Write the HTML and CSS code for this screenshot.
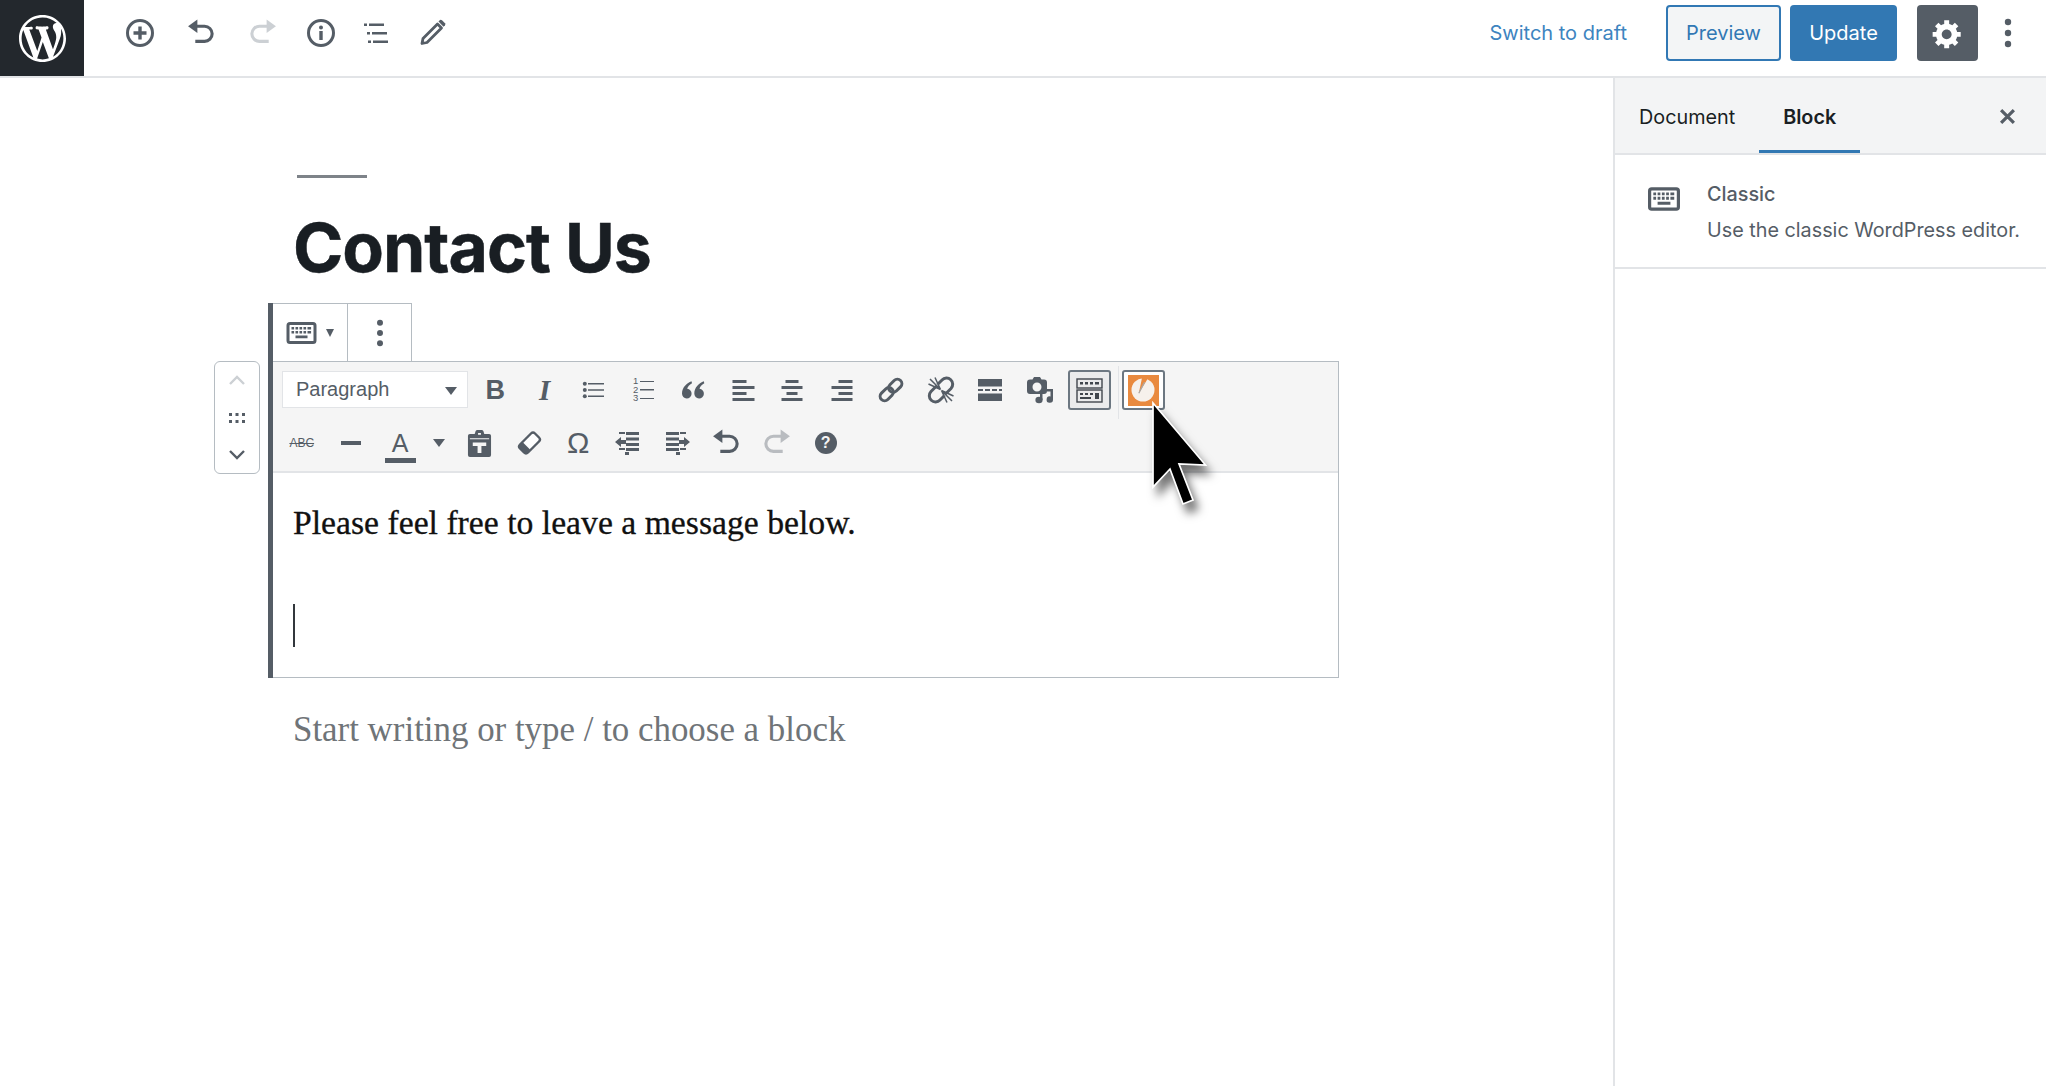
FILE: index.html
```html
<!DOCTYPE html>
<html>
<head>
  <title>Edit Page - Contact Us</title>
  <meta name="viewport" content="width=device-width, initial-scale=1">
  <link rel="stylesheet" href="styles.css">
</head>

<body>

  <svg class="defs" width="0" height="0">
    <symbol id="keyboard" viewBox="0 0 30 22">
      <rect x="1.5" y="1.5" width="27" height="19" rx="2" fill="none" stroke="currentColor" stroke-width="3"/>
      <path d="M5 5h2.6v2.6H5zM9 5h2.6v2.6H9zM13 5h2.6v2.6H13zM17 5h2.6v2.6H17zM21 5h3.6v2.6H21zM5 9h2.6v2.6H5zM9 9h2.6v2.6H9zM13 9h2.6v2.6H13zM17 9h2.6v2.6H17zM21 9h3.6v2.6H21zM9 13.500h12v2.800H9z" fill="currentColor"/>
    </symbol>
    <symbol id="undo" viewBox="0 0 30 30">
      <path d="M2 8 L11 1.500 V14.500 Z" fill="currentColor"/>
      <path d="M10 8 H18 A7.300 7.300 0 0 1 18 22.600 H9" fill="none" stroke="currentColor" stroke-width="3"/>
    </symbol>
    <symbol id="redo" viewBox="0 0 30 30">
      <path d="M28 8 L19 1.500 V14.500 Z" fill="currentColor"/>
      <path d="M20 8 H12 A7.300 7.300 0 0 0 12 22.600 H21" fill="none" stroke="currentColor" stroke-width="3"/>
    </symbol>
    <symbol id="dots" viewBox="0 0 10 30">
      <circle cx="5" cy="4" r="3.200" fill="currentColor"/>
      <circle cx="5" cy="15" r="3.200" fill="currentColor"/>
      <circle cx="5" cy="26" r="3.200" fill="currentColor"/>
    </symbol>
  </svg>

  <header class="topbar">
    <a class="wp-logo" href="#">
      <svg width="47" height="47" viewBox="0 0 20 20"><path fill="#fff" d="M20 10c0-5.510-4.490-10-10-10C4.480 0 0 4.490 0 10c0 5.520 4.480 10 10 10 5.510 0 10-4.480 10-10zM7.780 15.370L4.370 6.220c.55-.02 1.170-.08 1.170-.08.5-.06.44-1.130-.06-1.110 0 0-1.450.11-2.370.11-.18 0-.37 0-.58-.01C4.120 2.690 6.870 1.110 10 1.110c2.330 0 4.450.87 6.050 2.340-.68-.11-1.650.39-1.650 1.580 0 .74.45 1.360.9 2.100.35.61.55 1.360.55 2.460 0 1.490-1.400 5-1.400 5l-3.030-8.370c.54-.02.82-.17.82-.17.5-.05.44-1.250-.06-1.220 0 0-1.440.12-2.380.12-.87 0-2.330-.12-2.330-.12-.5-.03-.56 1.200-.06 1.220l.92.08 1.260 3.410zM17.410 10c.24-.64.74-1.870.43-4.250.7 1.290 1.050 2.710 1.050 4.250 0 3.290-1.730 6.240-4.400 7.780.97-2.590 1.940-5.200 2.920-7.780zM6.100 18.090C3.120 16.650 1.110 13.530 1.110 10c0-1.300.23-2.480.72-3.590C3.250 10.300 4.670 14.200 6.100 18.090zm4.030-6.630l2.580 6.980c-.86.29-1.760.45-2.710.45-.79 0-1.570-.11-2.290-.33.81-2.380 1.620-4.740 2.420-7.100z"/></svg>
    </a>
    <div class="top-tools">
      <button class="top-btn"><svg width="30" height="30" viewBox="0 0 30 30"><circle cx="15" cy="15" r="12.500" fill="none" stroke="currentColor" stroke-width="3"/><path d="M13.300 8.500h3.400v4.800h4.800v3.400h-4.800v4.800h-3.400v-4.800H8.500v-3.400h4.800z" fill="currentColor"/></svg></button>
      <button class="top-btn"><svg width="31" height="31"><use href="#undo"/></svg></button>
      <button class="top-btn disabled"><svg width="31" height="31"><use href="#redo"/></svg></button>
      <button class="top-btn tight"><svg width="30" height="30" viewBox="0 0 30 30"><circle cx="15" cy="15" r="12.500" fill="none" stroke="currentColor" stroke-width="3"/><circle cx="15" cy="9.500" r="2" fill="currentColor"/><rect x="13.300" y="13" width="3.400" height="9" fill="currentColor"/></svg></button>
      <button class="top-btn tighter"><svg width="30" height="30" viewBox="0 0 30 30"><path d="M2 5.500h3v2.600H2zM7 5.500h15v2.600H7zM5 14h3v2.600H5zM10 14h15v2.600H10zM6 22.500h3v2.600H6zM11 22.500h15v2.600H11z" fill="currentColor"/></svg></button>
      <button class="top-btn tighter"><svg width="30" height="30" viewBox="0 0 30 30"><path d="M6 20.500 L20.500 6 L24.500 10 L10 24.500 L5 25.500 Z" fill="none" stroke="currentColor" stroke-width="2.800" stroke-linejoin="round"/><path d="M21.500 3.500 L23 2 Q24 1.500 25 2.300 L28 5.300 Q28.700 6.300 28 7.300 L26.500 8.800 Z" fill="currentColor"/></svg></button>
    </div>
    <div class="top-actions">
      <a class="draft-link" href="#">Switch to draft</a>
      <button class="btn btn-preview">Preview</button>
      <button class="btn btn-update">Update</button>
      <button class="btn btn-settings"><svg width="33" height="33" viewBox="0 0 20 20"><path fill="#fff" fill-rule="evenodd" d="M18 12h-2.180c-.17.7-.44 1.350-.81 1.930l1.540 1.540-2.100 2.100-1.540-1.540c-.58.36-1.230.63-1.910.79V19H8v-2.180c-.68-.16-1.330-.43-1.910-.79l-1.540 1.540-2.120-2.120 1.540-1.540c-.36-.58-.63-1.230-.79-1.910H1V9.030h2.170c.16-.7.44-1.350.8-1.940L2.430 5.550l2.100-2.100 1.540 1.540c.58-.37 1.240-.64 1.930-.81V2h3v2.180c.68.16 1.330.43 1.910.79l1.540-1.540 2.120 2.120-1.540 1.540c.36.590.64 1.240.8 1.940H18V12zm-8.500 1.500c1.660 0 3-1.340 3-3s-1.340-3-3-3-3 1.340-3 3 1.340 3 3 3z"/></svg></button>
      <svg class="more" width="10" height="30"><use href="#dots"/></svg>
    </div>
  </header>

  <div class="layout">
    <main class="editor">
      <div class="post">
        <div class="title-wrap">
          <hr class="title-rule">
          <h1 class="post-title">Contact Us</h1>
        </div>

        <section class="block">
          <div class="block-tools">
            <div class="tool-cell tool-switch">
              <svg class="ink" width="31" height="22"><use href="#keyboard"/></svg>
              <span class="mini-caret"></span>
            </div>
            <div class="tool-cell tool-more">
              <svg class="ink" width="10" height="28"><use href="#dots"/></svg>
            </div>
          </div>

          <div class="mover">
            <svg class="mover-up" width="18" height="12" viewBox="0 0 18 12"><path d="M2 10 L9 3 L16 10" fill="none" stroke="currentColor" stroke-width="2.400"/></svg>
            <svg class="ink" width="18" height="12" viewBox="0 0 18 12"><path d="M1 1h3v3H1zM7.500 1h3v3h-3zM14 1h3v3h-3zM1 8h3v3H1zM7.500 8h3v3h-3zM14 8h3v3h-3z" fill="currentColor"/></svg>
            <svg class="ink" width="18" height="12" viewBox="0 0 18 12"><path d="M2 2 L9 9 L16 2" fill="none" stroke="currentColor" stroke-width="2.400"/></svg>
          </div>

          <div class="classic">
            <div class="mce-toolbar">
              <div class="mce-row">
                <div class="mce-select">Paragraph<span class="caret"></span></div>
                <span class="mce-btn glyph-b">B</span>
                <span class="mce-btn glyph-i">I</span>
                <span class="mce-btn"><svg width="24" height="24" viewBox="0 0 24 24"><path d="M6 5h16v1.500H6zM6 11.200h16v1.500H6zM6 17.400h16v1.500H6z" fill="currentColor"/><circle cx="2.800" cy="5.800" r="2" fill="currentColor"/><circle cx="2.800" cy="12" r="2" fill="currentColor"/><circle cx="2.800" cy="18.200" r="2" fill="currentColor"/></svg></span>
                <span class="mce-btn num-list"><span class="nums">1<br>2<br>3</span><span class="num-lines"></span></span>
                <span class="mce-btn"><svg width="24" height="20" viewBox="0 0 24 20"><path d="M10.500 1.200 C6 3 1 7 1 13.500 A4.800 4.800 0 1 0 6.200 8.800 C6.700 6.500 8.400 4.600 11 3.200 Z M22.800 1.200 C18.300 3 13.300 7 13.300 13.500 A4.800 4.800 0 1 0 18.500 8.800 C19 6.500 20.700 4.600 23.300 3.200 Z" fill="currentColor"/></svg></span>
                <span class="mce-btn"><svg width="24" height="22" viewBox="0 0 24 22"><path d="M1.500 1h14v3h-14zM1.500 7h22v3h-22zM1.500 13h14v3h-14zM1.500 19h22v3h-22z" fill="currentColor"/></svg></span>
                <span class="mce-btn"><svg width="24" height="22" viewBox="0 0 24 22"><path d="M5.500 1h13v3h-13zM1.500 7h21v3h-21zM6.500 13h11v3h-11zM1.500 19h21v3h-21z" fill="currentColor"/></svg></span>
                <span class="mce-btn"><svg width="24" height="22" viewBox="0 0 24 22"><path d="M8.500 1h14v3h-14zM1.500 7h21v3h-21zM8.500 13h14v3h-14zM1.500 19h21v3h-21z" fill="currentColor"/></svg></span>
                <span class="mce-btn"><svg width="28" height="28" viewBox="0 0 28 28"><g fill="none" stroke="currentColor" stroke-width="3" transform="rotate(-45 14 14)"><rect x="0.500" y="9.500" width="15" height="9" rx="4.500"/><rect x="12.500" y="9.500" width="15" height="9" rx="4.500"/></g></svg></span>
                <span class="mce-btn"><svg width="28" height="28" viewBox="0 0 28 28"><g fill="none" stroke="currentColor" stroke-width="3"><path d="M10.500 8.500 L15 4 A6 6 0 0 1 24 12.500 L18.500 18"/><path d="M17.500 19.500 L13 24 A6 6 0 0 1 4 15.500 L9.500 10"/></g><path d="M13.500 13.500 L3 3M13.500 13.500 L1.500 8M13.500 13.500 L8 1.500M14.500 14.500 L25 25M14.500 14.500 L26.500 20M14.500 14.500 L20 26.500" stroke="currentColor" stroke-width="1.500"/></svg></span>
                <span class="mce-btn"><svg width="24" height="22" viewBox="0 0 24 22"><path d="M0 0h24v7.500H0zM0 14.500h24V22H0zM0 10h5v2H0zM7 10h5v2H7zM14 10h5v2h-5zM21 10h3v2h-3z" fill="currentColor"/></svg></span>
                <span class="mce-btn"><svg width="30" height="28" viewBox="0 0 30 28"><path fill="currentColor" fill-rule="evenodd" d="M5 3.500h2.500L9 1h6l1.500 2.500H19a3 3 0 0 1 3 3V15a3 3 0 0 1-3 3H5a3 3 0 0 1-3-3V6.500a3 3 0 0 1 3-3zM12 6.500a4.500 4.500 0 1 0 0 9 4.500 4.500 0 0 0 0-9z"/><path fill="currentColor" d="M22 13h6v10.500A3.200 3.200 0 1 1 25.500 20.500V15.500H22z"/><ellipse cx="14" cy="24" rx="3.600" ry="3.200" fill="currentColor"/><path d="M15 15h2.500v9h-2.500z" fill="currentColor"/></svg></span>
                <span class="mce-btn"><span class="btn-frame active"><svg width="27" height="25" viewBox="0 0 27 25"><g fill="none" stroke="#40464d" stroke-width="1.400"><rect x="1" y="1" width="25" height="9"/><rect x="1" y="12" width="25" height="12"/></g><path d="M4 4h3v2.500H4zM9 4h3v2.500H9zM14 4h3v2.500h-3zM19 4h4v2.500h-4zM4 15h3v2H4zM9 15h3v2H9zM14 15h3v2h-3zM19 15h4v6h-4zM4 19h11v2H4z" fill="#40464d"/></svg></span></span>
                <span class="mce-sep"></span>
                <span class="btn-frame plugin">
                  <span class="plugin-icon"><svg width="26" height="26" viewBox="0 0 26 26"><circle cx="13" cy="13" r="11.500" fill="#f6f1ec"/><path d="M12.200 0 L18.800 0 L8.800 16.200 Z" fill="#e98a3f"/><path d="M14.500 5.200 L8.800 16.200" fill="none" stroke="#a8a8a8" stroke-width="1.300"/></svg></span>
                  <svg class="pointer" width="76" height="124" viewBox="0 0 76 124"><path d="M3 3 L55.500 65 L29 64 L43 100 L33 104 L20 69 L3 87 Z" fill="#000" stroke="#fff" stroke-width="1.700" stroke-linejoin="miter"/></svg>
                </span>
              </div>
              <div class="mce-row row-two">
                <span class="mce-btn glyph-abc">ABC</span>
                <span class="mce-btn"><span class="dash"></span></span>
                <span class="mce-btn glyph-a">A</span>
                <span class="mce-caret"><span class="caret"></span></span>
                <span class="mce-btn"><svg width="25" height="27" viewBox="0 0 26 28"><path fill="currentColor" d="M3 4h5l1-3a2 2 0 0 1 2-1h4a2 2 0 0 1 2 1l1 3h5a2 2 0 0 1 2 2v20a2 2 0 0 1-2 2H3a2 2 0 0 1-2-2V6a2 2 0 0 1 2-2z"/><path fill="#f5f5f5" d="M11.500 3h3v2h-3zM3 8.500h20v1.200H3zM6 13h14v3.500h-5V24h-4v-7.500H6z"/></svg></span>
                <span class="mce-btn"><svg width="26" height="26" viewBox="0 0 26 26"><path d="M15 3.500 Q17 1.500 19 3.500 L23 7.500 Q25 9.500 23 11.500 L12 22.500 Q10 24.500 8 22.500 L4 18.500 Q2 16.500 4 14.500 Z" fill="#fff" stroke="currentColor" stroke-width="2.400"/><path d="M6.500 12 L14 19.500 L12 22.500 Q10 24.500 8 22.500 L4 18.500 Q2 16.500 4 14.500 Z" fill="currentColor"/></svg></span>
                <span class="mce-btn glyph-omega">Ω</span>
                <span class="mce-btn"><svg width="26" height="24" viewBox="0 0 26 24"><path d="M4 1h6v2H4zM11 1h13v3H11zM11 6.500h13v3H11zM11 12h13v3H11zM4 17h6v2H4zM11 17h13v3H11zM10 21h4v3h-4zM6 6v3h5v4H6v3L0 11z" fill="currentColor"/></svg></span>
                <span class="mce-btn"><svg width="26" height="24" viewBox="0 0 26 24"><path d="M2 1h13v3H2zM16 1h6v2h-6zM2 6.500h13v3H2zM2 12h13v3H2zM2 17h13v3H2zM16 17h6v2h-6zM12 21h4v3h-4zM20 6v3h-5v4h5v3l6-5z" fill="currentColor"/></svg></span>
                <span class="mce-btn"><svg width="31" height="31"><use href="#undo"/></svg></span>
                <span class="mce-btn faded"><svg width="31" height="31"><use href="#redo"/></svg></span>
                <span class="mce-btn"><span class="help-icon">?</span></span>
              </div>
            </div>
            <div class="mce-content">
              <p>Please feel free to leave a message below.</p>
              <span class="text-cursor"></span>
            </div>
          </div>
        </section>

        <p class="placeholder">Start writing or type / to choose a block</p>
      </div>
    </main>

    <aside class="sidebar">
      <div class="side-head">
        <span class="side-tab">Document</span>
        <span class="side-tab current">Block</span>
        <svg class="side-close" width="17" height="17" viewBox="0 0 16 16"><path d="M2 2 L14 14 M14 2 L2 14" stroke="#555d66" stroke-width="3"/></svg>
      </div>
      <div class="block-card">
        <svg class="ink" width="32" height="24"><use href="#keyboard"/></svg>
        <div class="card-text">
          <h2>Classic</h2>
          <p>Use the classic WordPress editor.</p>
        </div>
      </div>
    </aside>
  </div>

</body>

</html>
```

FILE: styles.css
```css
html, body {
  margin: 0;
  height: 100%;
}

body {
  font-family: Inter, "Noto Sans", sans-serif;
  color: #555d66;
  background: #fff;
  overflow: hidden;
}

.defs {
  position: absolute;
}

button {
  font: inherit;
  border: 0;
  background: none;
  padding: 0;
}

svg {
  display: block;
}

.ink {
  color: #555d66;
}

/* top bar */
.topbar {
  display: flex;
  align-items: center;
  height: 76px;
  border-bottom: 2px solid #e2e4e7;
}

.wp-logo {
  display: flex;
  align-items: center;
  justify-content: center;
  width: 84px;
  height: 76px;
  background: #23282d;
}

.top-tools {
  display: flex;
  margin-left: 25.500px;
  margin-top: -10px;
}

.top-btn {
  display: flex;
  align-items: center;
  justify-content: center;
  width: 61px;
  height: 32px;
  color: #555d66;
}

.top-btn.tight {
  width: 57px;
}

.top-btn.tighter {
  width: 55px;
}

.top-btn.disabled {
  color: #ccd0d4;
}

.top-actions {
  display: flex;
  align-items: center;
  margin-left: auto;
  margin-right: 33px;
  margin-top: -10px;
}

.draft-link {
  font-size: 20px;
  color: #3d84c0;
  text-decoration: none;
  margin-right: 39px;
}

.btn {
  height: 56px;
  font-size: 20px;
  border-radius: 4px;
}

.btn-preview {
  width: 115px;
  color: #3178b4;
  background: #f3f5f6;
  border: 2px solid #3178b4;
  margin-right: 9px;
}

.btn-update {
  width: 107px;
  color: #fff;
  background: #3278b3;
  margin-right: 20px;
}

.btn-settings {
  display: flex;
  align-items: center;
  justify-content: center;
  width: 61px;
  background: #555d66;
  margin-right: 25px;
}

.more {
  color: #555d66;
}

/* page layout */
.layout {
  display: flex;
  height: 1008px;
}

.editor {
  flex: 1;
}

.sidebar {
  width: 433px;
  border-left: 2px solid #e2e4e7;
  box-sizing: border-box;
}

/* post column */
.post {
  width: 1071px;
  margin-left: 268px;
}

.title-wrap {
  padding: 97px 0 0 29px;
  height: 128px;
}

.title-rule {
  width: 70px;
  height: 3px;
  margin: 0;
  border: 0;
  background: #7e8389;
}

.post-title {
  margin: 29px 0 0 -4px;
  font-size: 68px;
  line-height: 80px;
  font-weight: 700;
  letter-spacing: -1px;
  -webkit-text-stroke: 0.5px #191e23;
  color: #191e23;
}

/* classic block */
.block {
  position: relative;
  border-left: 5px solid #555d66;
}

.block-tools {
  display: flex;
  height: 57px;
  width: fit-content;
  border-top: 1px solid #b5bcc2;
  border-right: 1px solid #b5bcc2;
}

.tool-cell {
  display: flex;
  align-items: center;
  justify-content: center;
}

.tool-switch {
  width: 74px;
  gap: 9px;
  border-right: 1px solid #b5bcc2;
}

.tool-more {
  width: 63px;
}

.mini-caret {
  border-top: 8px solid #555d66;
  border-left: 4.500px solid transparent;
  border-right: 4.500px solid transparent;
}

.mover {
  position: absolute;
  left: -59px;
  top: 58px;
  box-sizing: border-box;
  width: 46px;
  height: 113px;
  padding: 12px 0 12px;
  display: flex;
  flex-direction: column;
  align-items: center;
  justify-content: space-between;
  background: #fff;
  border: 1px solid #b5bcc2;
  border-radius: 6px;
}

.mover-up {
  color: #ccd0d4;
}

.classic {
  border: 1px solid #b5bcc2;
  border-left: 0;
}

.mce-toolbar {
  padding: 7px 0 7px;
  background: #f5f5f5;
  border-bottom: 2px solid #e2e4e7;
}

.mce-row {
  display: flex;
  align-items: center;
  height: 42px;
  padding-left: 9px;
}

.row-two {
  margin-top: 11px;
  padding-left: 4px;
}

.mce-select {
  position: relative;
  box-sizing: border-box;
  width: 186px;
  height: 37px;
  margin: -2px 2.500px 0 0;
  padding-left: 13px;
  background: #fff;
  border: 1px solid #e2e4e7;
  font: 20px/35px "Liberation Sans", sans-serif;
  color: #555d66;
}

.caret {
  display: block;
  border-top: 8px solid #555d66;
  border-left: 6px solid transparent;
  border-right: 6px solid transparent;
}

.mce-select .caret {
  position: absolute;
  right: 10px;
  top: 15px;
}

.mce-btn {
  display: flex;
  align-items: center;
  justify-content: center;
  width: 49.500px;
  height: 42px;
  flex: none;
  color: #555d66;
}

.faded {
  color: #b9bcc0;
}

.glyph-b {
  font: 700 27px "Liberation Sans", sans-serif;
}

.glyph-i {
  font: italic 700 29px "Liberation Serif", serif;
}

.num-list {
  gap: 2px;
}

.nums {
  font: 9.500px/8.500px "Liberation Sans", sans-serif;
}

.num-lines {
  width: 14px;
  height: 16px;
  border-top: 1.500px solid #555d66;
  border-bottom: 1.500px solid #555d66;
  background: linear-gradient(#555d66, #555d66) center / 100% 1.500px no-repeat;
}

.btn-frame {
  display: flex;
  align-items: center;
  justify-content: center;
  box-sizing: border-box;
  width: 43px;
  height: 40px;
  border-radius: 3px;
  border: 2px solid #6c7781;
}

.btn-frame.active {
  background: #eaebec;
}

.mce-sep {
  width: 1px;
  height: 53px;
  margin: 5px 3px 0 3.500px;
  background: #e2e4e7;
}

.plugin {
  position: relative;
  background: #fff;
}

.plugin-icon {
  display: flex;
  align-items: center;
  justify-content: center;
  width: 31px;
  height: 31px;
  background: #e98a3f;
}

.pointer {
  position: absolute;
  left: 26px;
  top: 28px;
  filter: drop-shadow(5px 9px 5px rgba(0, 0, 0, 0.55));
}

.glyph-abc {
  font: 12px "Liberation Sans", sans-serif;
  text-decoration: line-through;
}

.dash {
  width: 20px;
  height: 4px;
  background: #555d66;
}

.glyph-a {
  width: 48px;
  font: 25px/28px "Liberation Sans", sans-serif;
  box-sizing: border-box;
  background: linear-gradient(#555d66, #555d66) center 36px / 31px 5px no-repeat;
}

.mce-caret {
  display: flex;
  justify-content: center;
  width: 30.500px;
}

.glyph-omega {
  font: 30px "Liberation Sans", sans-serif;
}

.help-icon {
  display: block;
  width: 22px;
  height: 22px;
  border-radius: 50%;
  background: #555d66;
  color: #f5f5f5;
  font: 700 16px/22px "Liberation Sans", sans-serif;
  text-align: center;
}

.mce-content {
  padding: 21px 19px 30px 20px;
  font-family: "Liberation Serif", serif;
  color: #111;
}

.mce-content p {
  margin: 0;
  font-size: 33.700px;
  line-height: 58px;
  -webkit-text-stroke: 0.3px #111;
}

.text-cursor {
  display: block;
  width: 2px;
  height: 43px;
  margin: 52px 0 0 0;
  background: #32373c;
}

.placeholder {
  margin: 30px 0 0 25px;
  font: 34.900px/44px "Liberation Serif", serif;
  color: #6f7478;
}

/* sidebar */
.side-head {
  display: flex;
  position: relative;
  height: 75px;
  background: #f3f4f5;
  border-bottom: 2px solid #e2e4e7;
}

.side-tab {
  display: flex;
  align-items: center;
  padding: 2px 24px 0;
  font-size: 19.800px;
  color: #191e23;
}

.side-tab.current {
  font-weight: 600;
  box-shadow: inset 0 -3px 0 #3278b3;
}

.side-close {
  position: absolute;
  right: 30px;
  top: 30px;
}

.block-card {
  display: flex;
  gap: 27px;
  height: 114px;
  padding: 32px 0 0 33px;
  box-sizing: border-box;
  border-bottom: 2px solid #e2e4e7;
}

.block-card h2 {
  margin: -8px 0 0;
  font-size: 19.800px;
  line-height: 30px;
  font-weight: 500;
}

.block-card p {
  margin: 6px 0 0;
  font-size: 19.800px;
  line-height: 30px;
  white-space: nowrap;
}
```
